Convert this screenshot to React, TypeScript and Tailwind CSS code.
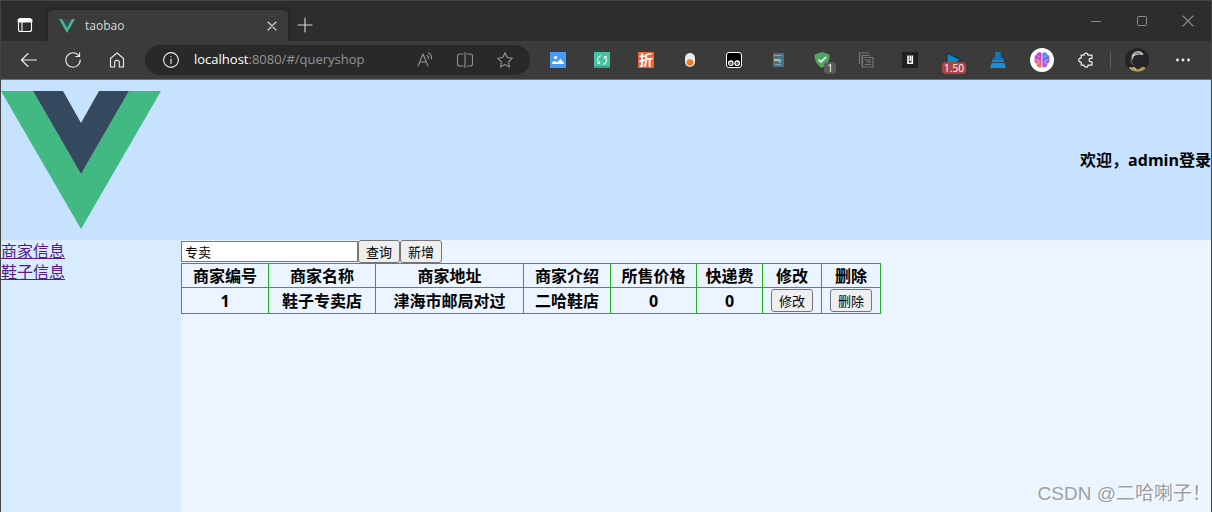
import type { ReactNode } from "react";

const columns = [
  { label: "商家编号", width: "w-[87px]" },
  { label: "商家名称", width: "w-[107px]" },
  { label: "商家地址", width: "w-[148px]" },
  { label: "商家介绍", width: "w-[87px]" },
  { label: "所售价格", width: "w-[86px]" },
  { label: "快递费", width: "w-[66px]" },
  { label: "修改", width: "w-[59px]" },
  { label: "删除", width: "w-[59px]" },
];

const shops = [
  { id: 1, name: "鞋子专卖店", address: "津海市邮局对过", intro: "二哈鞋店", price: 0, fee: 0 },
];

function VueLogo({ className }: { className: string }) {
  return (
    <svg className={className} viewBox="0 0 160 138" aria-hidden="true">
      <path fill="#42b883" d="M0 0h32l48 83L128 0h32L80 138z" />
      <path fill="#35495e" d="M32 0h30l18 32L98 0h30L80 83z" />
    </svg>
  );
}

function Line({ children, size = "size-4" }: { children: ReactNode; size?: string }) {
  return (
    <svg
      className={size}
      viewBox="0 0 16 16"
      fill="none"
      stroke="currentColor"
      strokeWidth="1.1"
      strokeLinecap="round"
      strokeLinejoin="round"
      aria-hidden="true"
    >
      {children}
    </svg>
  );
}

function ToolButton({ label, children }: { label: string; children: ReactNode }) {
  return (
    <button type="button" aria-label={label} className="relative flex h-8 w-11 shrink-0 items-center justify-center">
      {children}
    </button>
  );
}

function TabBar() {
  return (
    <div className="flex h-10 items-end bg-[#2d2d2d] text-[#d8d8d8]">
      <button type="button" aria-label="标签操作菜单" className="flex h-8 w-[47px] items-center justify-center text-white">
        <Line>
          <rect x="1.5" y="1.5" width="13" height="13" rx="2" />
          <path d="M1.5 3h13M1.5 4.6h13" strokeWidth="2" />
          <path d="M5 5v9" />
        </Line>
      </button>
      <div className="flex h-[31px] w-60 items-center rounded-t bg-[#3b3b3b] pl-[11px] pr-2 shadow-[0_0_3px_#161616]">
        <VueLogo className="h-[14px] w-4" />
        <span className="ml-[10px] flex-1 text-xs">taobao</span>
        <button type="button" aria-label="关闭标签页" className="flex size-4 items-center justify-center">
          <Line>
            <path d="M4 4l8 8M12 4l-8 8" />
          </Line>
        </button>
      </div>
      <button type="button" aria-label="新建标签页" className="flex h-8 w-[34px] items-center justify-center">
        <Line>
          <path d="M8 1v14M1 8h14" />
        </Line>
      </button>
      <div className="ml-auto flex h-10 text-[#8c8c8c]">
        <button type="button" aria-label="最小化" className="flex w-[46px] items-center justify-center">
          <Line>
            <path d="M3 8.5h10" strokeLinecap="butt" strokeWidth="1" />
          </Line>
        </button>
        <button type="button" aria-label="最大化" className="flex w-[46px] items-center justify-center">
          <Line>
            <rect x="3.5" y="3.5" width="9" height="9" rx="1" strokeWidth="1" />
          </Line>
        </button>
        <button type="button" aria-label="关闭" className="flex w-[46px] items-center justify-center">
          <Line>
            <path d="M3 3l10 10M13 3L3 13" />
          </Line>
        </button>
      </div>
    </div>
  );
}

function Extensions() {
  return (
    <div className="ml-[6px] flex">
      <ToolButton label="图片助手">
        <svg className="size-4" viewBox="0 0 16 16">
          <path fill="#4b9bf5" d="M0 0h16v16H0z" />
          <circle cx="5.5" cy="5.5" r="1.6" fill="#fff" />
          <path fill="#fff" d="M2 12v-1.5Q5 7.500 7 10.500L10.500 7 14 11v1z" />
        </svg>
      </ToolButton>
      <ToolButton label="同步">
        <svg className="size-4" viewBox="0 0 16 16" fill="none">
          <path fill="#45c2a0" d="M0 0h16v16H0z" />
          <path fill="#36a488" d="M0 14h16v2H0z" />
          <g stroke="#d8f7ec" strokeWidth="1.200">
            <path d="M7 3.600A4.500 4.500 0 0 0 4.600 11M9 12.400A4.500 4.500 0 0 0 11.400 5" />
            <path d="M3 11.500h2.500V9M13 4.500h-2.500V7" />
          </g>
        </svg>
      </ToolButton>
      <ToolButton label="折扣">
        <span className="flex size-4 items-center justify-center bg-[#f0623a] text-sm leading-4 font-bold text-white">
          折
        </span>
      </ToolButton>
      <ToolButton label="胶囊">
        <svg className="size-4" viewBox="0 0 16 16">
          <rect x="3" y="1" width="10" height="14" rx="5" fill="#ececec" />
          <circle cx="8" cy="10.500" r="3.300" fill="#f47b20" />
        </svg>
      </ToolButton>
      <ToolButton label="脚本管理器">
        <svg className="size-4" viewBox="0 0 16 16">
          <rect x=".5" y=".5" width="15" height="15" rx="2.500" fill="#000" stroke="#fff" />
          <g fill="none" stroke="#fff" strokeWidth="1.300">
            <circle cx="4.800" cy="11.200" r="2.200" />
            <circle cx="11.200" cy="11.200" r="2.200" />
          </g>
          <circle cx="4.800" cy="11.200" r=".7" fill="#fff" />
          <circle cx="11.200" cy="11.200" r=".7" fill="#fff" />
        </svg>
      </ToolButton>
      <ToolButton label="笔记">
        <svg className="size-4" viewBox="0 0 16 16" fill="none">
          <rect x="3" y="1" width="11" height="14" rx="1" fill="#526f80" />
          <path stroke="#83a2b4" d="M4 3.500h8M5 12.500h6" />
          <path stroke="#e3b565" strokeWidth="2" d="M4 8h5" />
          <path fill="#59c4ee" d="M9 6.500l3 2-3 3v-2H8v-1.500h1z" />
        </svg>
      </ToolButton>
      <ToolButton label="防护">
        <svg className="size-4" viewBox="0 0 16 16" fill="none">
          <path fill="#4fa763" d="M8 0l7.500 2.500C16 9 12 14 8 16 4 14 0 9 .5 2.500z" />
          <path stroke="#fff" strokeWidth="1.500" d="M4.500 7.500l2.500 2.500 5-5" />
        </svg>
        <span className="absolute left-6 top-[18px] flex size-3 items-center justify-center rounded-sm bg-[#5a5a5a] text-[10px] leading-3 text-white">
          1
        </span>
      </ToolButton>
      <ToolButton label="复制">
        <svg className="size-4" viewBox="0 0 16 16" fill="none" stroke="#747474" strokeWidth="1.200">
          <path d="M1.500 12V1H11M4 14V3.500h8" />
          <path d="M4.500 5.500H15v9.500H4.500zM6.500 8H13M8.500 10.200H13M6.500 12.500H13" />
        </svg>
      </ToolButton>
      <ToolButton label="划词">
        <svg className="size-4" viewBox="0 0 16 16" fill="none">
          <path fill="#202020" d="M0 0h16v16H0z" />
          <path stroke="#fff" strokeWidth="1.600" d="M6 3.500V11.300H10.300V3.500M8.300 3.500V9" />
        </svg>
      </ToolButton>
      <ToolButton label="倍速播放">
        <svg className="size-4" viewBox="0 0 16 16">
          <path fill="#078ac6" stroke="#18282f" d="M1 1l14 7-14 7z" />
        </svg>
        <span className="absolute left-[10px] top-[18px] flex h-3 w-6 items-center justify-center rounded-sm bg-[#ad4545] text-[10px] leading-3 text-white">
          1.50
        </span>
      </ToolButton>
      <ToolButton label="清理">
        <svg className="size-4" viewBox="0 0 16 16">
          <path fill="#1676b8" d="M5.500 0h5l.7 6H4.800zM3 6h10l1 4H2z" />
          <path fill="#168fda" d="M2 8.500h12v1.500H2zM1.500 11h13L16 16H0z" />
        </svg>
      </ToolButton>
      <ToolButton label="智能助手">
        <svg className="size-6" viewBox="0 0 24 24">
          <defs>
            <linearGradient id="brain-left" x1="0" y1="0" x2="0" y2="1">
              <stop stopColor="#b83df0" />
              <stop offset=".5" stopColor="#d84bb0" />
              <stop offset="1" stopColor="#ff7a3d" />
            </linearGradient>
            <linearGradient id="brain-right" x1="0" y1="0" x2="0" y2="1">
              <stop stopColor="#4c9bf8" />
              <stop offset=".5" stopColor="#7a63f2" />
              <stop offset="1" stopColor="#c24df0" />
            </linearGradient>
          </defs>
          <circle cx="12" cy="12" r="12" fill="#fff" />
          <path
            fill="url(#brain-left)"
            d="M11.600 5C10 3.500 7 4 6.800 6.500c-2 .5-2.800 2.500-2 4.200-1 2 0 4.300 1.700 4.800 0 3.500 3.500 5 5.100 3.200z"
          />
          <path
            fill="url(#brain-right)"
            d="M12.400 5C14 3.500 17 4 17.200 6.500c2 .5 2.800 2.500 2 4.200 1 2 0 4.300-1.700 4.800 0 3.500-3.500 5-5.100 3.200z"
          />
          <path fill="none" stroke="#fff" strokeWidth=".6" d="M8 7.500l1.500 1.500M5.500 12H9M8 16v-1.500l2-1M16 7.500L14.500 9M18.500 12H15M16 16v-1.500l-2-1" />
        </svg>
      </ToolButton>
      <ToolButton label="扩展">
        <Line>
          <path
            strokeWidth="1.200"
            d="M3.200 3.200H6a2 2 0 0 1 4 0h4V6.300h-1.200a1.800 1.800 0 0 0 0 3.600H14v3.300h-4a2 2 0 0 1-4 0H3.200V10.100H2.700a2 2 0 0 1 0-4h.5z"
          />
        </Line>
      </ToolButton>
    </div>
  );
}

function Toolbar() {
  return (
    <div className="flex h-[39px] items-center border-b border-[#69717a] bg-[#3b3b3b] pl-[6px] text-[#f0f0f0]">
      <ToolButton label="返回">
        <Line>
          <path d="M15.500 8H1M7 1.500L.5 8 7 14.500" />
        </Line>
      </ToolButton>
      <ToolButton label="刷新">
        <Line>
          <path d="M14 4A7.200 7.200 0 1 0 15.200 8M14.600.8V4.500H10.800" />
        </Line>
      </ToolButton>
      <ToolButton label="主页">
        <Line>
          <path d="M1.500 6.500L8 .8l6.500 5.700V15h-4.200v-4.500a2.300 2.300 0 0 0-4.600 0V15H1.500z" />
        </Line>
      </ToolButton>
      <div className="ml-[6px] flex h-[30px] min-w-0 flex-1 items-center rounded-full bg-[#292929] pl-[18px] pr-[5px]">
        <Line size="size-4 shrink-0">
          <circle cx="8" cy="8" r="7.400" />
          <path d="M8 7v4.500M8 4.500v.2" />
        </Line>
        <a href="#/queryshop" className="ml-[15px] flex-1 truncate text-[13px] text-[#949494]">
          <span className="text-white">localhost</span>:8080/#/queryshop
        </a>
        <div className="flex text-[#929292]">
          <button type="button" aria-label="大声朗读" className="flex w-10 items-center justify-center">
            <Line>
              <path d="M1 14L6 2l5 12M2.700 10h6.600M10 3.500a3 3 0 0 1 1.500 3M11.500 1a6 6 0 0 1 3 6" />
            </Line>
          </button>
          <button type="button" aria-label="分屏" className="flex w-10 items-center justify-center">
            <Line>
              <path d="M6 2H2.500Q.5 2 .5 4v8q0 2 2 2H6M10 2h3.500q2 0 2 2v8q0 2-2 2H10M8 0v16" />
            </Line>
          </button>
          <button type="button" aria-label="收藏" className="flex w-10 items-center justify-center">
            <Line>
              <path d="M8 .8l2.200 4.700 5.200.7-3.800 3.600.9 5.200L8 12.500 3.500 15l.9-5.200L.6 6.200l5.200-.7z" />
            </Line>
          </button>
        </div>
      </div>
      <Extensions />
      <span className="ml-[2px] h-4 w-px bg-[#606060]" />
      <button type="button" aria-label="个人资料" className="ml-[14px]">
        <svg className="size-6" viewBox="0 0 24 24">
          <circle cx="12" cy="12" r="12" fill="#242424" />
          <path fill="#b39a52" d="M4 19l5 .5 4 2 5-3 3 1.500a12 12 0 0 1-16.500 1z" />
          <path fill="#24262c" d="M8 9l4-3 8 1 .5 6-3 5-5 2-3.500-3z" />
          <path fill="#c6c4bd" d="M6.500 8.500Q7.500 3.500 13.500 3q4 .5 5 4L13 6.500 9 8l-2 4.500z" />
          <path fill="#7d7b78" d="M8 5.500l5-1.500 3 1.500-5 .5z" />
          <path fill="none" stroke="#b4565c" d="M6 11v3l2.500 3" />
          <path fill="none" stroke="#d7d1be" d="M8 19l3 2" />
        </svg>
      </button>
      <button type="button" aria-label="设置及其他" className="ml-[23px] mr-[17px] flex h-8 w-[22px] items-center justify-center">
        <svg className="size-4" viewBox="0 0 16 16" fill="currentColor">
          <circle cx="2.500" cy="8" r="1.400" />
          <circle cx="8" cy="8" r="1.400" />
          <circle cx="13.500" cy="8" r="1.400" />
        </svg>
      </button>
    </div>
  );
}

function PlainButton({ children }: { children: ReactNode }) {
  return (
    <button
      type="button"
      className="h-[23px] rounded-[3px] border border-[#767676] bg-[#efefef] px-[7px] text-[13px] leading-5 font-normal text-black"
    >
      {children}
    </button>
  );
}

function ShopTable() {
  return (
    <table className="table-fixed border-collapse text-base leading-5 font-bold">
      <thead>
        <tr className="h-6">
          {columns.map((column) => (
            <th key={column.label} scope="col" className={`${column.width} border border-[#20b020] p-0`}>
              {column.label}
            </th>
          ))}
        </tr>
      </thead>
      <tbody className="text-center">
        {shops.map((shop) => (
          <tr key={shop.id} className="h-[26px]">
            {[shop.id, shop.name, shop.address, shop.intro, shop.price, shop.fee].map((value, index) => (
              <td key={index} className="border border-[#20b020] p-0">
                {value}
              </td>
            ))}
            <td className="border border-[#20b020] p-0 align-middle">
              <div className="flex justify-center">
                <PlainButton>修改</PlainButton>
              </div>
            </td>
            <td className="border border-[#20b020] p-0 align-middle">
              <div className="flex justify-center">
                <PlainButton>删除</PlainButton>
              </div>
            </td>
          </tr>
        ))}
      </tbody>
    </table>
  );
}

export default function App() {
  return (
    <div className="relative flex min-h-screen flex-col border-x border-t border-[#454545] font-['Open_Sans','Noto_Sans_CJK_SC',sans-serif] text-black">
      <TabBar />
      <Toolbar />
      <header className="flex h-40 items-center justify-between bg-[#c6e2ff]">
        <VueLogo className="h-[138px] w-40" />
        <strong className="text-base">欢迎，admin登录</strong>
      </header>
      <div className="flex flex-1">
        <nav className="flex w-[180px] shrink-0 flex-col items-start bg-[#d9ecff] pt-px text-base leading-[21px] text-[#551a8b] underline">
          <a href="#/queryshop">商家信息</a>
          <a href="#/queryshoes">鞋子信息</a>
        </nav>
        <main className="min-w-0 flex-1 bg-[#ecf4ff]">
          <form className="flex h-[23px] items-center" onSubmit={(event) => event.preventDefault()}>
            <input
              type="text"
              aria-label="商家名称"
              defaultValue="专卖"
              className="h-[21px] w-[177px] border border-[#767676] bg-white px-[3px] text-[13px]"
            />
            <PlainButton>查询</PlainButton>
            <PlainButton>新增</PlainButton>
          </form>
          <ShopTable />
        </main>
      </div>
      <p className="absolute right-0 bottom-1 font-['Liberation_Sans','Noto_Sans_CJK_SC',sans-serif] text-[19px] text-[#9a9ea5] [text-shadow:1px_1px_0_#fff]">
        CSDN @二哈喇子！
      </p>
    </div>
  );
}
